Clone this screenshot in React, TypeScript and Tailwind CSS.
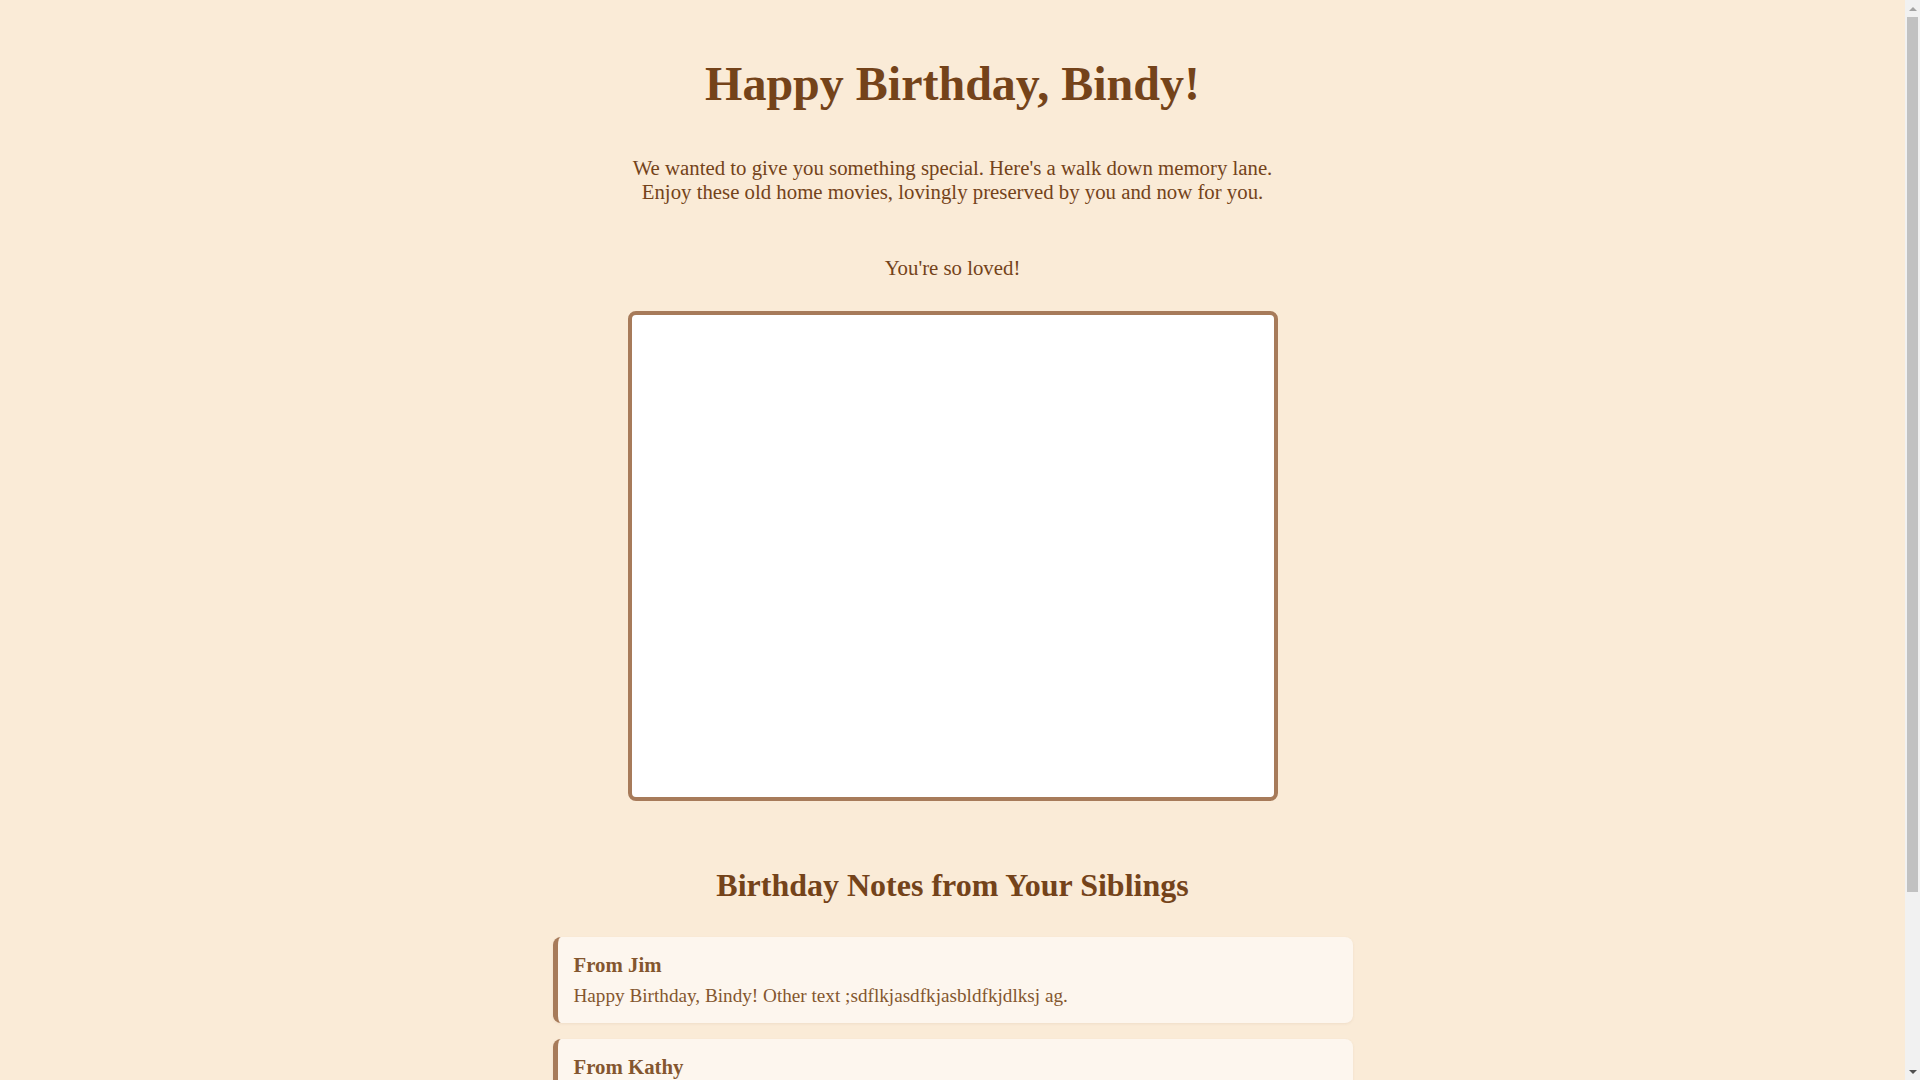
const notes = [
  { from: "Jim", text: "Happy Birthday, Bindy! Other text ;sdflkjasdfkjasbldfkjdlksj ag." },
  { from: "Kathy", text: "Happy Birthday, Bindy! Wishing you the happiest of days." },
  { from: "Tom", text: "Happy Birthday! So many good memories in these movies." },
]

function NoteCard({ from, text }: { from: string; text: string }) {
  return (
    <div className="bg-[#fdf6ee] border-l-[5px] border-[#a77b5a] rounded-lg px-4 py-4 text-left shadow-[0_1px_3px_rgba(120,80,40,0.08)]">
      <h3 className="text-[20.8px] font-bold leading-[1.15] mb-2 text-[#84562f]">From {from}</h3>
      <p className="text-[19.2px] leading-[1.15] text-[#84562f]">{text}</p>
    </div>
  )
}

function Scrollbar() {
  return (
    <div className="sticky top-0 self-start h-screen w-[15px] shrink-0 bg-[#f1f1f1] flex flex-col">
      <div className="h-[17px] flex items-center justify-center">
        <div className="w-0 h-0 border-x-[4px] border-x-transparent border-b-[4px] border-b-[#a3a3a3]" />
      </div>
      <div className="flex-1 px-[2px]">
        <div className="h-[875px] bg-[#c1c1c1]" />
      </div>
      <div className="h-[17px] flex items-center justify-center">
        <div className="w-0 h-0 border-x-[4px] border-x-transparent border-t-[4px] border-t-[#505050]" />
      </div>
    </div>
  )
}

export default function App() {
  return (
    <div className="flex bg-[#faebd7] font-['Liberation_Serif','Times_New_Roman',serif]">
      <main className="flex-1 min-h-screen text-center pt-[56px] pb-16">
        <h1 className="text-[48px] font-bold leading-[55px] text-[#74431a]">Happy Birthday, Bindy!</h1>

        <p className="mt-[45px] text-[20.8px] leading-[1.15] text-[#74431a]">
          We wanted to give you something special. Here's a walk down memory lane.
          <br />
          Enjoy these old home movies, lovingly preserved by you and now for you.
        </p>

        <p className="mt-[52px] text-[20.8px] leading-[1.15] text-[#74431a]">You're so loved!</p>

        <div className="mx-auto mt-[31px] w-[650px] h-[490px] border-4 border-[#a77b5a] rounded-lg bg-white" />

        <h2 className="mt-[66px] text-[32px] font-bold leading-[37px] text-[#74431a]">
          Birthday Notes from Your Siblings
        </h2>

        <div className="mx-auto mt-[33px] max-w-[800px] flex flex-col gap-4">
          {notes.map((n) => (
            <NoteCard key={n.from} from={n.from} text={n.text} />
          ))}
        </div>
      </main>
      <Scrollbar />
    </div>
  )
}
